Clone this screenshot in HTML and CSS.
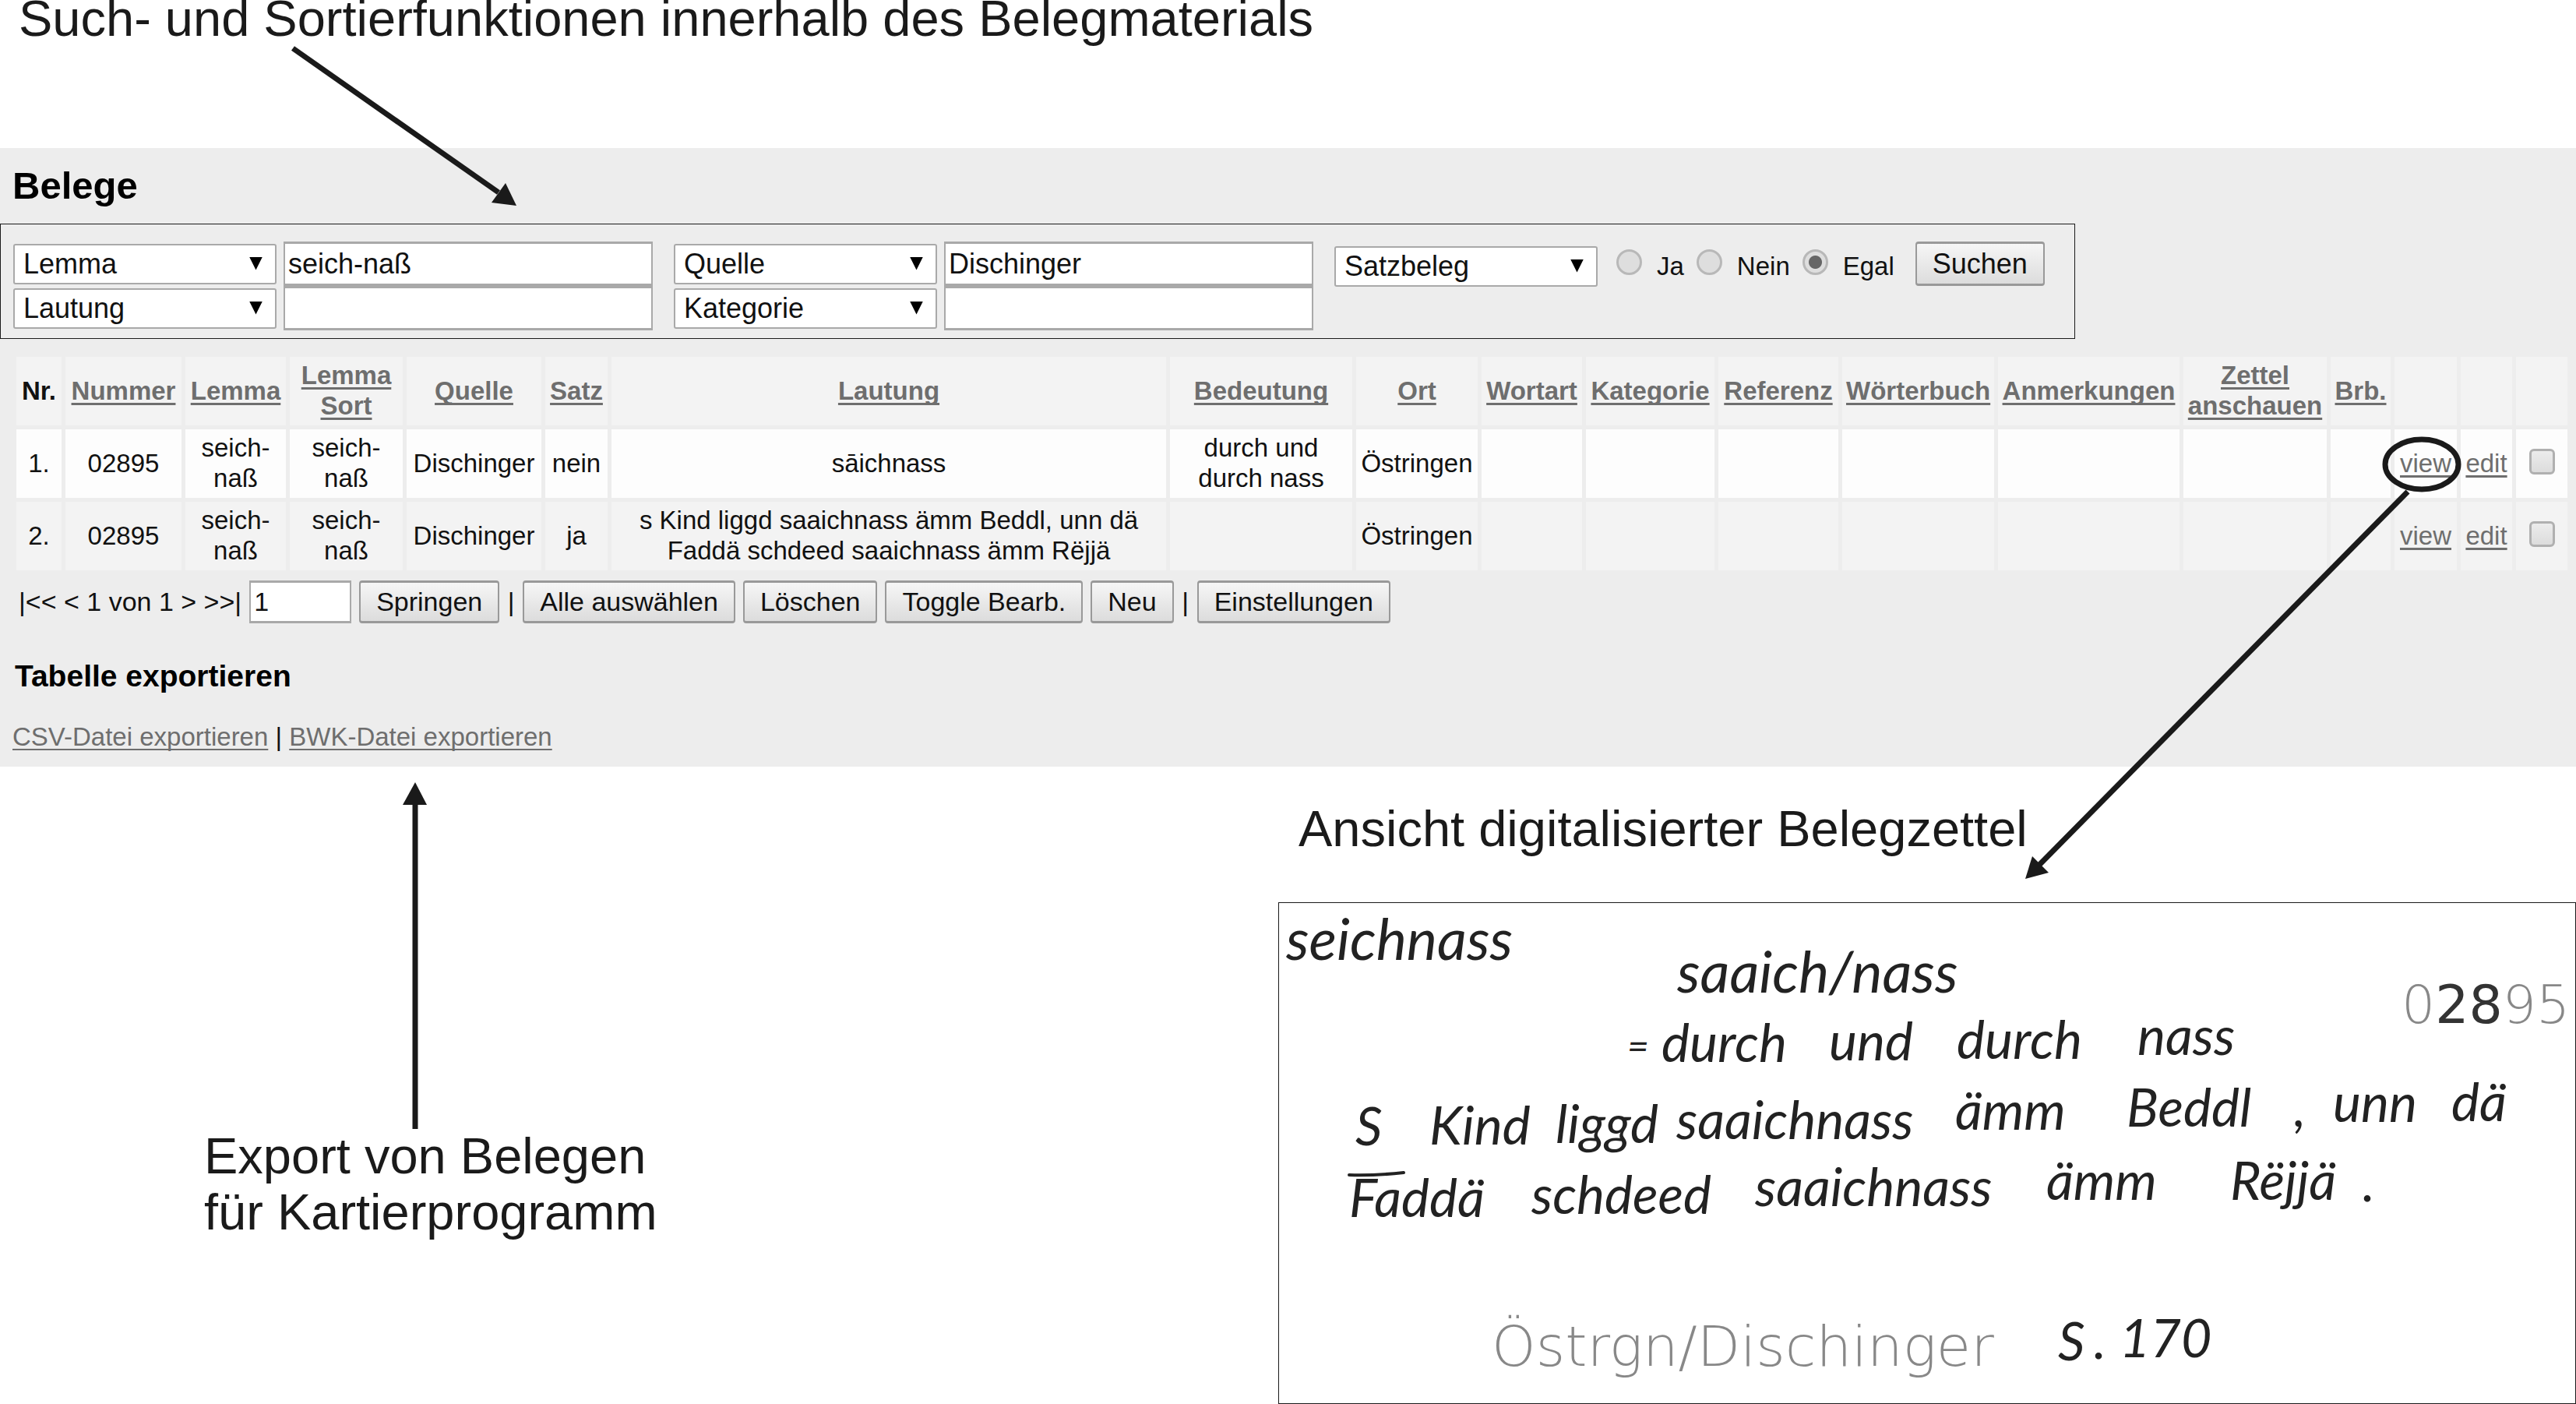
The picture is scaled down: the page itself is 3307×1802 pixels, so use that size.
FILE: index.html
```html
<!DOCTYPE html>
<html lang="de">
<head>
<meta charset="utf-8">
<title>Belege</title>
<link rel="stylesheet" href="styles.css">
</head>
<body>
<main class="page">
  <p class="caption caption-top">Such- und Sortierfunktionen innerhalb des Belegmaterials</p>

  <section class="panel">
    <h1 class="panel-title">Belege</h1>

    <form class="search">
      <div class="filters">
        <span class="select"><select aria-label="Feld 1"><option>Lemma</option></select></span>
        <input class="field" type="text" value="seich-naß" aria-label="Suchwert 1">
        <span class="select"><select aria-label="Feld 2"><option>Lautung</option></select></span>
        <input class="field" type="text" aria-label="Suchwert 2">
      </div>
      <div class="filters">
        <span class="select"><select aria-label="Feld 3"><option>Quelle</option></select></span>
        <input class="field" type="text" value="Dischinger" aria-label="Suchwert 3">
        <span class="select"><select aria-label="Feld 4"><option>Kategorie</option></select></span>
        <input class="field" type="text" aria-label="Suchwert 4">
      </div>
      <div class="options">
        <span class="select"><select aria-label="Belegart"><option>Satzbeleg</option></select></span>
        <div class="radios">
          <label class="choice"><input type="radio" name="satz">Ja</label>
          <label class="choice"><input type="radio" name="satz">Nein</label>
          <label class="choice"><input type="radio" name="satz" checked>Egal</label>
        </div>
      </div>
      <button class="button button-search" type="button">Suchen</button>
    </form>

    <table class="records">
      <colgroup>
        <col class="c-nr"><col class="c-nummer"><col class="c-lemma"><col class="c-sort"><col class="c-quelle"><col class="c-satz"><col><col class="c-bedeutung"><col class="c-ort"><col class="c-wortart"><col class="c-kategorie"><col class="c-referenz"><col class="c-buch"><col class="c-anm"><col class="c-zettel"><col class="c-brb"><col class="c-view"><col class="c-edit"><col class="c-check">
      </colgroup>
      <thead>
        <tr>
          <th>Nr.</th>
          <th><a href="#">Nummer</a></th>
          <th><a href="#">Lemma</a></th>
          <th><a href="#">Lemma Sort</a></th>
          <th><a href="#">Quelle</a></th>
          <th><a href="#">Satz</a></th>
          <th><a href="#">Lautung</a></th>
          <th><a href="#">Bedeutung</a></th>
          <th><a href="#">Ort</a></th>
          <th><a href="#">Wortart</a></th>
          <th><a href="#">Kategorie</a></th>
          <th><a href="#">Referenz</a></th>
          <th><a href="#">Wörterbuch</a></th>
          <th><a href="#">Anmerkungen</a></th>
          <th><a href="#">Zettel anschauen</a></th>
          <th><a href="#">Brb.</a></th>
          <th></th>
          <th></th>
          <th></th>
        </tr>
      </thead>
      <tbody>
        <tr>
          <td>1.</td><td>02895</td><td>seich-naß</td><td>seich-naß</td><td>Dischinger</td><td>nein</td>
          <td>sāichnass</td><td>durch und durch nass</td><td>Östringen</td>
          <td></td><td></td><td></td><td></td><td></td><td></td><td></td>
          <td><a href="#">view</a></td><td><a href="#">edit</a></td>
          <td><input type="checkbox" aria-label="Beleg 1 auswählen"></td>
        </tr>
        <tr>
          <td>2.</td><td>02895</td><td>seich-naß</td><td>seich-naß</td><td>Dischinger</td><td>ja</td>
          <td>s Kind liggd saaichnass ämm Beddl, unn dä Faddä schdeed saaichnass ämm Rëjjä</td><td></td><td>Östringen</td>
          <td></td><td></td><td></td><td></td><td></td><td></td><td></td>
          <td><a href="#">view</a></td><td><a href="#">edit</a></td>
          <td><input type="checkbox" aria-label="Beleg 2 auswählen"></td>
        </tr>
      </tbody>
    </table>

    <div class="pager">
      <span>|&lt;&lt; &lt; 1 von 1 &gt; &gt;&gt;|</span>
      <input class="page-number" type="text" value="1" aria-label="Seite">
      <button class="button" type="button">Springen</button>
      <span class="divider">|</span>
      <button class="button" type="button">Alle auswählen</button>
      <button class="button" type="button">Löschen</button>
      <button class="button" type="button">Toggle Bearb.</button>
      <button class="button" type="button">Neu</button>
      <span class="divider">|</span>
      <button class="button" type="button">Einstellungen</button>
    </div>

    <h2 class="export-title">Tabelle exportieren</h2>
    <p class="export-links"><a href="#">CSV-Datei exportieren</a> | <a href="#">BWK-Datei exportieren</a></p>
  </section>

  <div class="lower">
    <p class="caption caption-export">Export von Belegen<br>für Kartierprogramm</p>
    <section class="slip-area">
      <p class="caption caption-slip">Ansicht digitalisierter Belegzettel</p>
      <svg class="slip" viewBox="0 0 1666 644" role="img" aria-label="Belegzettel">
        <rect class="slip-edge" x="0.5" y="0.5" width="1665" height="643"/>
        <g class="hand">
          <text class="hand-large" x="10" y="74">seichnass</text>
          <text class="hand-large" x="512" y="116">saaich/nass</text>
          <text><tspan class="hand-small" x="448" y="202">=</tspan><tspan x="492" y="205">durch</tspan> <tspan x="707" y="203">und</tspan> <tspan x="871" y="201">durch</tspan> <tspan x="1103" y="196">nass</tspan></text>
          <text><tspan x="99" y="312">S</tspan> <tspan x="194" y="311">Kind</tspan> <tspan x="356" y="309">liggd</tspan> <tspan x="511" y="304">saaichnass</tspan> <tspan x="869" y="292">ämm</tspan> <tspan x="1089" y="288">Beddl</tspan> <tspan x="1304" y="288">,</tspan> <tspan x="1354" y="282">unn</tspan> <tspan x="1506" y="281">dä</tspan></text>
          <text><tspan x="91" y="404">Faddä</tspan> <tspan x="325" y="400">schdeed</tspan> <tspan x="612" y="390">saaichnass</tspan> <tspan x="986" y="382">ämm</tspan> <tspan x="1222" y="382">Rëjjä</tspan> <tspan x="1392" y="384">.</tspan></text>
          <text><tspan x="1001" y="588">S</tspan> <tspan x="1047" y="586">.</tspan> <tspan x="1080" y="584">170</tspan></text>
        </g>
        <path class="pen" d="M91 350 Q125 351 161 347"/>
        <g class="stamp">
          <text class="stamp-source" x="274" y="595">Östrgn/Dischinger</text>
          <text x="1442" y="155">0<tspan class="stamp-over">28</tspan>95</text>
        </g>
      </svg>
    </section>
  </div>

  <svg class="arrows" viewBox="0 0 3307 1802" aria-hidden="true">
    <path d="M376 62 L640 247"/>
    <path class="head" d="M663 264 L649 235 L631 260 Z"/>
    <path d="M3091 631 L2618 1110"/>
    <path class="head" d="M2600 1128 L2609 1099 L2630 1120 Z"/>
    <path d="M533 1449 V1030"/>
    <path class="head" d="M533 1004 L517 1033 H548 Z"/>
    <ellipse cx="3109" cy="596" rx="47" ry="32"/>
  </svg>
</main>
</body>
</html>
```
FILE: styles.css
```css
* {
  box-sizing: border-box;
}

body {
  margin: 0;
  background: #fff;
  color: #111;
  font-family: "Liberation Sans", Arial, sans-serif;
  font-size: 33px;
}

h1, h2, p {
  margin: 0;
}

a {
  color: #6e6e6e;
  text-decoration-thickness: 3px;
  text-underline-offset: 4px;
  text-decoration-skip-ink: none;
}

.page {
  position: relative;
}

.caption {
  color: #1a1a1a;
  font-size: 65px;
  line-height: 72px;
}

.caption-top {
  padding: 0 24px 142px;
  line-height: 48px;
}

/* Search panel */

.panel {
  padding: 20px 0 16px;
  background: #ededed;
}

.panel-title {
  padding-left: 16px;
  color: #000;
  font-size: 49px;
  line-height: 56px;
}

.search {
  display: flex;
  align-items: flex-start;
  gap: 27px;
  width: fit-content;
  margin-top: 21px;
  padding: 22px 38px 10px 16px;
  border: 1px solid #1a1a1a;
}

.filters {
  display: grid;
  grid-template-columns: 338px 474px;
  grid-auto-rows: 57px;
  column-gap: 9px;
  align-items: center;
}

.select {
  position: relative;
  width: 338px;
  height: 52px;
}

.select::after {
  content: "";
  position: absolute;
  top: 17px;
  right: 18px;
  width: 17px;
  height: 17px;
  background: #000;
  clip-path: polygon(0 0, 100% 0, 50% 100%);
  pointer-events: none;
}

select,
.field,
.page-number {
  border: 2px solid #a9a9a9;
  border-radius: 0;
  background: #fff;
  color: #111;
  font-family: inherit;
}

select {
  width: 100%;
  height: 100%;
  padding: 0 40px 0 11px;
  border-radius: 3px;
  appearance: none;
  font-size: 36px;
}

.field {
  width: 100%;
  height: 57px;
  padding: 0 4px;
  border-width: 3px 2px;
  font-size: 36px;
}

.options {
  display: flex;
  align-items: center;
  gap: 24px;
  padding-top: 3px;
  height: 60px;
}

.radios {
  display: flex;
  gap: 16px;
}

.choice {
  display: flex;
  align-items: center;
  gap: 19px;
}

input[type="radio"] {
  width: 33px;
  height: 33px;
  margin: 0 0 10px;
  border: 3px solid #b8b8b8;
  border-radius: 50%;
  appearance: none;
  background: #dedede;
}

input[type="radio"]:checked {
  background: radial-gradient(circle, #666 0 8px, #dedede 9px);
}

.button {
  height: 55px;
  padding: 0 20px;
  border: 2px solid #999;
  border-width: 3px 2px;
  border-radius: 4px;
  background: linear-gradient(#f6f6f6, #dcdcdc);
  color: #111;
  font-family: inherit;
  font-size: 34px;
}

.button-search {
  height: 57px;
  font-size: 36px;
}

/* Result table */

.records {
  width: calc(100% - 22px);
  margin: 18px 6px 0 16px;
  border-spacing: 5px;
  table-layout: fixed;
  line-height: 39px;
  text-align: center;
}

.records th,
.records td {
  height: 88px;
  padding: 4px 5px 6px;
  background: #f3f3f3;
}

.records tbody tr:first-child td {
  background: #fdfdfd;
}

.c-nr { width: 58px; }
.c-nummer { width: 149px; }
.c-lemma { width: 129px; }
.c-sort { width: 145px; }
.c-quelle { width: 173px; }
.c-satz { width: 80px; }
.c-bedeutung { width: 234px; }
.c-ort { width: 156px; }
.c-wortart { width: 129px; }
.c-kategorie { width: 165px; }
.c-referenz { width: 154px; }
.c-buch { width: 195px; }
.c-anm { width: 233px; }
.c-zettel { width: 184px; }
.c-brb { width: 77px; }
.c-view { width: 80px; }
.c-edit { width: 66px; }
.c-check { width: 66px; }

input[type="checkbox"] {
  display: block;
  width: 33px;
  height: 33px;
  margin: 0 auto 4px;
  border: 3px solid #b0b0b0;
  border-radius: 6px;
  appearance: none;
  background: linear-gradient(#ececec, #dcdcdc);
}

.pager {
  display: flex;
  align-items: center;
  gap: 10px;
  margin-top: 8px;
  padding-left: 24px;
  font-size: 34px;
}

.page-number {
  width: 131px;
  height: 55px;
  padding: 0 4px;
  border-width: 3px 2px;
  font-size: 34px;
}

.divider {
  width: 10px;
  text-align: center;
}

.export-title {
  margin-top: 46px;
  padding-left: 19px;
  color: #000;
  font-size: 39px;
  line-height: 44px;
}

.export-links {
  margin-top: 36px;
  padding: 0 16px 2px;
  line-height: 40px;
}

.export-links a {
  text-decoration-thickness: 2px;
}

/* Export note and scanned slip */

.lower {
  display: grid;
  grid-template-columns: minmax(0, 1641fr) minmax(0, 1666fr);
}

.caption-export {
  padding: 464px 0 0 262px;
}

.slip-area {
  padding-top: 44px;
}

.caption-slip {
  padding: 0 0 58px 26px;
}

.slip {
  display: block;
  width: 100%;
}

.slip-edge {
  fill: #fff;
  stroke: #1a1a1a;
}

.hand {
  fill: #222;
  font-family: Lato, "Liberation Sans", sans-serif;
  font-size: 68px;
  font-style: italic;
}

.hand-large {
  font-size: 74px;
}

.hand-small {
  font-size: 48px;
}

.pen {
  fill: none;
  stroke: #222;
  stroke-width: 4;
  stroke-linecap: round;
}

.stamp {
  fill: #888;
  font-family: "DejaVu Sans", sans-serif;
  font-size: 68px;
  font-weight: 200;
}

.stamp-source {
  font-size: 72px;
}

.stamp-over {
  fill: #333;
  font-weight: 400;
}

.arrows {
  position: absolute;
  top: 0;
  left: 0;
  width: 100%;
  pointer-events: none;
  fill: none;
  stroke: #1a1a1a;
  stroke-width: 7;
}

.arrows .head {
  fill: #1a1a1a;
  stroke: none;
}
```
